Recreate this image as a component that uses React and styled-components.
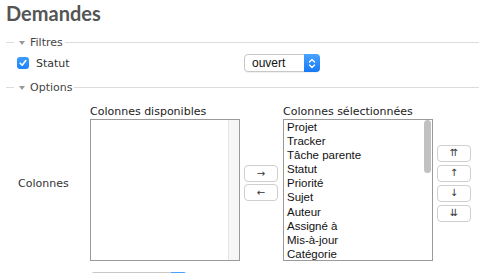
import React from "react";
import styled, { createGlobalStyle } from "styled-components";

const available = [];
const selected = [
  "Projet", "Tracker", "Tâche parente", "Statut", "Priorité", "Sujet",
  "Auteur", "Assigné à", "Mis-à-jour", "Catégorie",
];

const App = () => {
  return (
    <Page>
      <GlobalStyle />
      <Title>Demandes</Title>

      <Legend $top={10}>
        <Rule />
        <Triangle />
        <LegendText>Filtres</LegendText>
        <Rule $grow />
      </Legend>
      <FilterRow>
        <FilterLabel>
          <Checkbox>
            <svg width="8" height="8" viewBox="0 0 8 8">
              <path d="M1.2 4.2 L3.2 6.2 L6.8 1.6" fill="none" stroke="#fff" strokeWidth="1.6" strokeLinecap="round" strokeLinejoin="round" />
            </svg>
          </Checkbox>
          Statut
        </FilterLabel>
        <Select $w={76}>
          <SelectValue>ouvert</SelectValue>
          <SelectArrow>
            <svg width="8" height="11" viewBox="0 0 8 11">
              <path d="M1.5 4 L4 1.5 L6.5 4 M1.5 7 L4 9.5 L6.5 7" fill="none" stroke="#fff" strokeWidth="1.3" strokeLinecap="round" strokeLinejoin="round" />
            </svg>
          </SelectArrow>
        </Select>
      </FilterRow>

      <Legend $top={8}>
        <Rule />
        <Triangle />
        <LegendText>Options</LegendText>
        <Rule $grow />
      </Legend>
      <OptionsGrid $top={10}>
        <RowLabel>Colonnes</RowLabel>
        <ListCell>
          <ListTitle>Colonnes disponibles</ListTitle>
          <ListBox>
            {available.map((c) => (
              <Item key={c}>{c}</Item>
            ))}
            <ScrollTrack $bg="#f7f7f7" $line="#e6e6e6" />
          </ListBox>
        </ListCell>
        <ButtonStack $gap={2}>
          <MoveButton>→</MoveButton>
          <MoveButton>←</MoveButton>
        </ButtonStack>
        <ListCell>
          <ListTitle>Colonnes sélectionnées</ListTitle>
          <ListBox>
            {selected.map((c) => (
              <Item key={c}>{c}</Item>
            ))}
            <ScrollTrack $bg="transparent" $line="transparent">
              <ScrollThumb style={{ height: 53 }} />
            </ScrollTrack>
          </ListBox>
        </ListCell>
        <ButtonStack $gap={3}>
          <MoveButton>⇈</MoveButton>
          <MoveButton>↑</MoveButton>
          <MoveButton>↓</MoveButton>
          <MoveButton>⇊</MoveButton>
        </ButtonStack>
      </OptionsGrid>
      <OptionsGrid $top={11}>
        <RowLabel />
        <Select $w={97}>
          <SelectValue />
          <SelectArrow />
        </Select>
      </OptionsGrid>
    </Page>
  );
};

export default App;

const GlobalStyle = createGlobalStyle`
  html, body {
    margin: 0;
    overflow: hidden;
    background: #fff;
  }
  body {
    font-family: "DejaVu Sans", Verdana, sans-serif;
    font-size: 11px;
    color: #333;
  }
`;

const Page = styled.div`
  padding-left: 6px;
`;

const Title = styled.h2`
  margin: 1px 0 0;
  font: bold 20px/24px Lato, "Liberation Sans", sans-serif;
  color: #555;
`;

const Legend = styled.div`
  display: flex;
  align-items: center;
  height: 15px;
  margin-top: ${(p) => p.$top}px;
`;

const Rule = styled.span`
  height: 1px;
  background: #dcdcdc;
  flex: ${(p) => (p.$grow ? "1" : "0 0 8px")};
`;

const Triangle = styled.span`
  width: 0;
  height: 0;
  margin: 0 5px;
  border-left: 3.5px solid transparent;
  border-right: 3.5px solid transparent;
  border-top: 4px solid #9a9a9a;
`;

const LegendText = styled.span`
  margin-right: 2px;
  line-height: 15px;
  color: #444;
`;

const FilterRow = styled.div`
  display: grid;
  grid-template-columns: 227px auto;
  align-items: center;
  height: 18px;
  margin-top: 4px;
  padding-left: 11px;
`;

const FilterLabel = styled.label`
  display: flex;
  align-items: center;
  gap: 7px;
  color: #333;
`;

const Checkbox = styled.span`
  display: flex;
  align-items: center;
  justify-content: center;
  width: 12px;
  height: 12px;
  border-radius: 3px;
  background: linear-gradient(#3f9cff, #1a84f6);
`;

const Select = styled.div`
  display: flex;
  box-sizing: border-box;
  width: ${(p) => p.$w}px;
  height: 18px;
  border: 1px solid #c8c8c8;
  border-radius: 4px;
  background: #fff;
  box-shadow: 0 1px 1px rgba(0, 0, 0, 0.06);
`;

const SelectValue = styled.span`
  flex: 1;
  padding-left: 7px;
  font: 12px/16px "Liberation Sans", Arial, sans-serif;
  color: #111;
`;

const SelectArrow = styled.span`
  display: flex;
  align-items: center;
  justify-content: center;
  width: 16px;
  margin: -1px -1px -1px 0;
  border-radius: 0 4px 4px 0;
  background: linear-gradient(#4aa3ff, #1679f5);
`;

const OptionsGrid = styled.div`
  display: grid;
  grid-template-columns: 84px 154px 39px 154px 34px;
  align-items: center;
  margin-top: ${(p) => p.$top}px;
`;

const RowLabel = styled.div`
  padding-left: 12px;
  color: #333;
`;

const ListCell = styled.div`
  display: flex;
  flex-direction: column;
`;

const ListTitle = styled.div`
  line-height: 14px;
  color: #222;
`;

const ListBox = styled.div`
  position: relative;
  box-sizing: border-box;
  width: 150px;
  height: 142px;
  border: 1px solid #9a9a9a;
  overflow: hidden;
  font: 11.5px/14.1px "Liberation Sans", Arial, sans-serif;
  color: #111;
`;

const ScrollTrack = styled.div`
  position: absolute;
  top: 0;
  right: 0;
  bottom: 0;
  box-sizing: border-box;
  width: 11px;
  padding: 0 1px 0 2px;
  background: ${(p) => p.$bg};
  border-left: 1px solid ${(p) => p.$line};
`;

const ScrollThumb = styled.div`
  border-radius: 4px;
  background: #c1c1c1;
`;

const Item = styled.div`
  padding-left: 3px;
  white-space: nowrap;
`;

const ButtonStack = styled.div`
  display: flex;
  flex-direction: column;
  gap: ${(p) => p.$gap}px;
`;

const MoveButton = styled.button`
  display: flex;
  align-items: center;
  justify-content: center;
  box-sizing: border-box;
  width: 34px;
  height: 17px;
  padding: 0;
  border: 1px solid #cfcfcf;
  border-radius: 4px;
  background: #fff;
  font: 10px/1 "DejaVu Sans", sans-serif;
  color: #333;
`;
